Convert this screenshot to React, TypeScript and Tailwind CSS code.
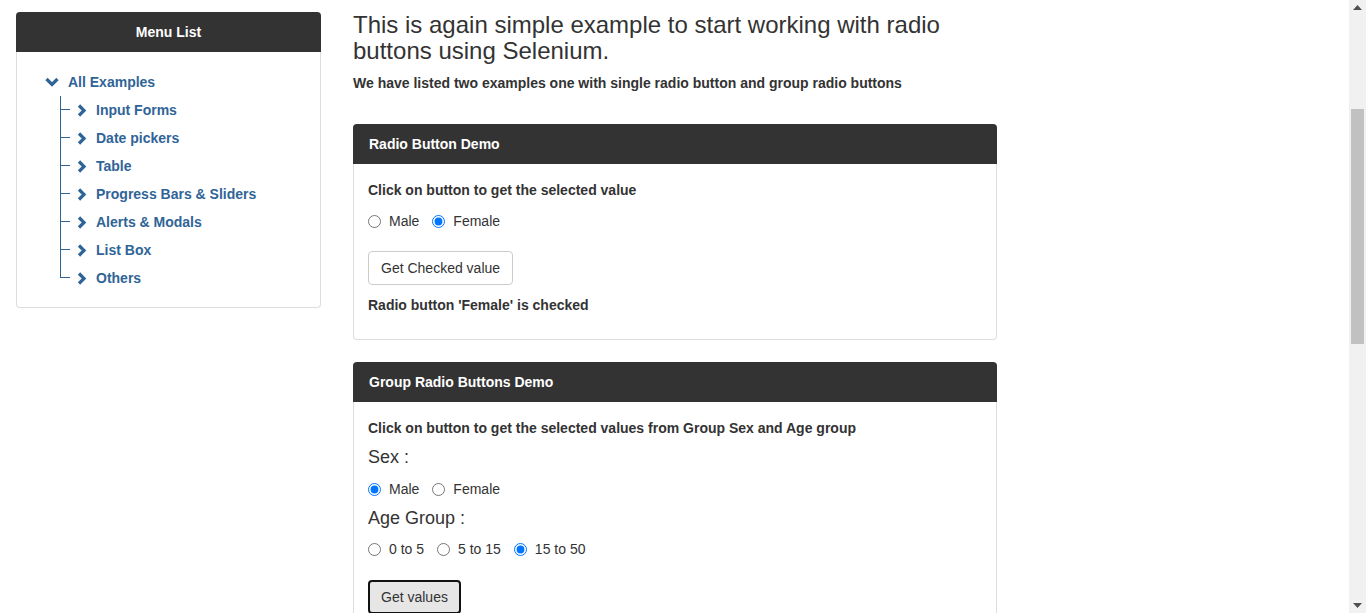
import React from "react";

const linkColor = "text-[#2f6497]";

function ChevronRight() {
  return (
    <svg width="10" height="13" viewBox="0 0 10 13" className="shrink-0">
      <polyline points="2,1.5 7,6.5 2,11.5" fill="none" stroke="#2f6497" strokeWidth="3.2" />
    </svg>
  );
}

function ChevronDown() {
  return (
    <svg width="14" height="10" viewBox="0 0 14 10" className="shrink-0">
      <polyline points="1.5,2 7,7.5 12.5,2" fill="none" stroke="#2f6497" strokeWidth="3.2" />
    </svg>
  );
}

const menuItems = [
  "Input Forms",
  "Date pickers",
  "Table",
  "Progress Bars & Sliders",
  "Alerts & Modals",
  "List Box",
  "Others",
];

function Sidebar() {
  return (
    <div className="w-[305px] shrink-0 self-start rounded-[4px] border border-t-0 border-[#dddddd] bg-white">
      <div className="-mx-px flex h-10 items-center justify-center rounded-t-[4px] bg-[#333333] text-sm font-bold text-white">
        Menu List
      </div>
      <div className="pb-[15px] pt-4">
        <div className="flex h-7 items-center pl-[28px]">
          <ChevronDown />
          <span className={`ml-[9px] text-sm font-bold ${linkColor}`}>All Examples</span>
        </div>
        <ul className="pl-[43px]">
          {menuItems.map((item, i) => {
            const last = i === menuItems.length - 1;
            return (
              <li key={item} className="flex h-7 items-stretch">
                <div className="flex w-[10px] flex-col">
                  <div className="h-[14px] border-l border-[#2f6497]" />
                  <div className={`flex-1 ${last ? "" : "border-l border-[#2f6497]"}`} />
                </div>
                <div className="relative flex flex-1 items-center">
                  <div className="absolute left-[-10px] top-[13px] h-px w-[10px] bg-[#2f6497]" />
                  <span className="ml-[7px]">
                    <ChevronRight />
                  </span>
                  <span className={`ml-[9px] text-sm font-bold ${linkColor}`}>{item}</span>
                </div>
              </li>
            );
          })}
        </ul>
      </div>
    </div>
  );
}

function Radio({ name, label, checked }: { name: string; label: string; checked?: boolean }) {
  return (
    <label className="inline-flex items-center text-sm text-[#333333]">
      <input type="radio" name={name} defaultChecked={checked} className="m-0 h-[13px] w-[13px]" />
      <span className="ml-[8px]">{label}</span>
    </label>
  );
}

function Panel({ title, children }: { title: string; children: React.ReactNode }) {
  return (
    <div className="w-[644px] rounded-[4px] border border-t-0 border-[#dddddd] bg-white">
      <div className="-mx-px flex h-10 items-center rounded-t-[4px] bg-[#333333] px-4 text-sm font-bold text-white">
        {title}
      </div>
      <div className="px-[14px]">{children}</div>
    </div>
  );
}

function Scrollbar() {
  return (
    <div className="flex h-full w-[17px] shrink-0 flex-col items-center bg-[#f1f1f1]">
      <svg width="9" height="5" viewBox="0 0 9 5" className="mt-[5px]">
        <polygon points="0,5 4.5,0 9,5" fill="#505050" />
      </svg>
      <div className="mt-[99px] h-[235px] w-[13px] bg-[#c1c1c1]" />
      <div className="flex-1" />
      <svg width="9" height="5" viewBox="0 0 9 5" className="mb-[5px]">
        <polygon points="0,0 4.5,5 9,0" fill="#505050" />
      </svg>
    </div>
  );
}

export default function App() {
  return (
    <div
      className="flex h-[613px] overflow-hidden bg-white text-[#333333]"
      style={{ fontFamily: '"Liberation Sans", Arial, sans-serif' }}
    >
      <div className="flex flex-1 items-start gap-[32px] pl-4 pt-3">
        <Sidebar />
        <div className="w-[644px]">
          <h1 className="text-2xl leading-[26px] font-normal text-[#333333]">
            This is again simple example to start working with radio
            <br />
            buttons using Selenium.
          </h1>
          <p className="mt-[9px] text-sm leading-5 font-bold">
            We have listed two examples one with single radio button and group radio buttons
          </p>

          <div className="mt-[31px]">
            <Panel title="Radio Button Demo">
              <p className="pt-4 text-sm leading-5 font-bold">Click on button to get the selected value</p>
              <div className="mt-[11px] flex h-5 items-center gap-[13px]">
                <Radio name="gender" label="Male" />
                <Radio name="gender" label="Female" checked />
              </div>
              <button className="mt-5 h-[34px] rounded-[4px] border border-[#cccccc] bg-white px-3 text-sm text-[#333333]">
                Get Checked value
              </button>
              <p className="mt-[10px] pb-[24px] text-sm leading-5 font-bold">
                Radio button 'Female' is checked
              </p>
            </Panel>
          </div>

          <div className="mt-[22px]">
            <Panel title="Group Radio Buttons Demo">
              <p className="pt-4 text-sm leading-5 font-bold">
                Click on button to get the selected values from Group Sex and Age group
              </p>
              <div className="mt-[9px] text-lg leading-5">Sex :</div>
              <div className="mt-3 flex h-5 items-center gap-[13px]">
                <Radio name="sex" label="Male" checked />
                <Radio name="sex" label="Female" />
              </div>
              <div className="mt-[9px] text-lg leading-5">Age Group :</div>
              <div className="mt-[11px] flex h-5 items-center gap-[13px]">
                <Radio name="age" label="0 to 5" />
                <Radio name="age" label="5 to 15" />
                <Radio name="age" label="15 to 50" checked />
              </div>
              <button className="mt-[21px] h-[34px] rounded-[4px] border-2 border-[#111111] bg-[#e6e6e6] px-[11px] text-sm text-[#333333]">
                Get values
              </button>
              <div className="h-8" />
            </Panel>
          </div>
        </div>
      </div>
      <Scrollbar />
    </div>
  );
}
